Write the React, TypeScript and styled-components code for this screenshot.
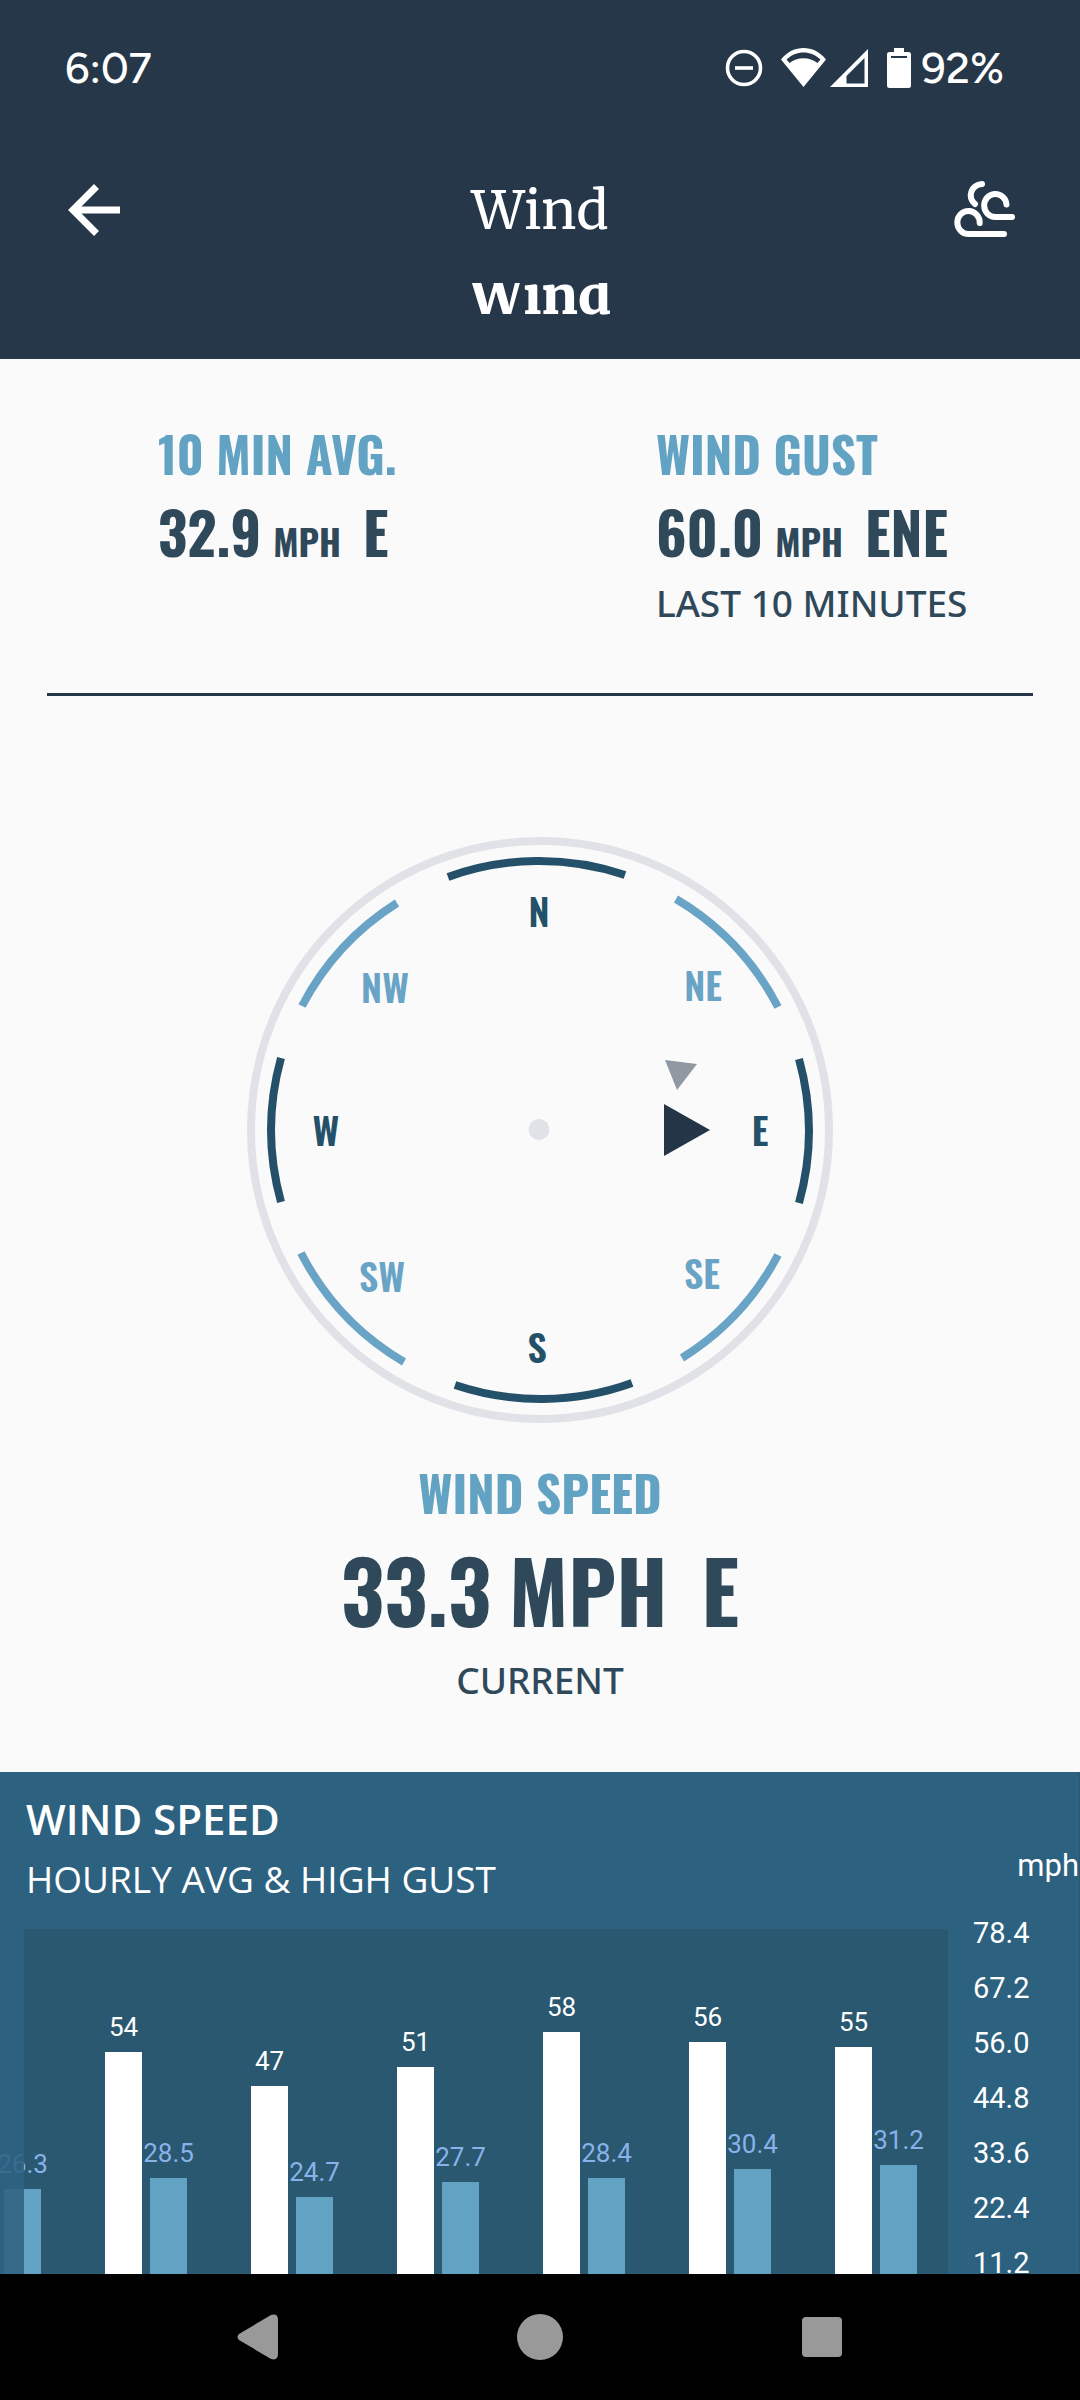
import React from "react";
import styled, { createGlobalStyle } from "styled-components";

const colors = {
  header: "#253748",
  page: "#fafafa",
  ink: "#2f495b",
  accent: "#62a3c4",
  compassDark: "#24506a",
  compassLight: "#69a4c6",
  ring: "#e1e2e7",
  panel: "#2d6180",
  plot: "#295870",
  avgLabel: "#8ab2ea",
};

const display = `"Oswald", "Roboto Condensed", "Open Sans Condensed", sans-serif`;
const body = `"Open Sans", "Noto Sans", sans-serif`;
const note = `"Noto Sans", "Open Sans", sans-serif`;
const heading = `"Merriweather", "DejaVu Serif Condensed", serif`;
const system = `"Figtree", "Lato", "Inter", sans-serif`;
const chartFont = `"Roboto", "Liberation Sans", sans-serif`;

const GlobalStyle = createGlobalStyle`
  *, *::before, *::after { box-sizing: border-box; }
  body { margin: 0; background: ${colors.page}; }
  h1, h2, p { margin: 0; font-weight: inherit; }
  button { padding: 0; border: 0; background: none; color: inherit; cursor: pointer; }
  svg { display: block; }
`;

const Screen = styled.div`
  display: flex;
  flex-direction: column;
  min-height: 100vh;
  overflow: hidden;
`;

/* Header */

const Header = styled.header`
  background: ${colors.header};
  color: #fff;
`;

const StatusBar = styled.div`
  display: flex;
  align-items: center;
  justify-content: space-between;
  height: 136px;
  padding: 0 76px 0 65px;
  font: 500 43px/56px ${system};
`;

const StatusIcons = styled.div`
  display: flex;
  align-items: center;
  gap: 18px;
`;

const BatteryStatus = styled.div`
  display: flex;
  align-items: center;
  gap: 10px;
`;

const TitleRow = styled.div`
  display: grid;
  grid-template-columns: 64px 1fr 64px;
  align-items: center;
  height: 147px;
  padding: 0 62px;
`;

const IconButton = styled.button`
  display: flex;
  align-items: center;
  justify-content: center;
  width: 64px;
  height: 64px;
`;

const Title = styled.h1`
  font: 400 53px/72px ${heading};
  text-align: center;
`;

const CollapsedTitle = styled.div`
  height: 76px;
  overflow: hidden;
  font: 900 53px/24px ${heading};
  text-align: center;
`;

/* Readings */

const Stats = styled.section`
  display: grid;
  grid-template-columns: 54% 46%;
  padding: 64px 0 66px 158px;
`;

const Stat = styled.div<{ $centered?: boolean }>`
  display: flex;
  flex-direction: column;
  align-items: ${(p) => (p.$centered ? "center" : "flex-start")};
  gap: ${(p) => (p.$centered ? 18 : 12)}px;
  white-space: nowrap;
`;

const StatTitle = styled.h2`
  color: ${colors.accent};
  font: 700 49px/60px ${display};
`;

const StatValue = styled.p<{ $large?: boolean }>`
  display: flex;
  align-items: baseline;
  gap: ${(p) => (p.$large ? 18 : 12)}px;
  height: ${(p) => (p.$large ? 98 : 72)}px;
  color: ${colors.ink};
  font: 700 ${(p) => (p.$large ? "84px/98px" : "57px/72px")} ${display};
`;

const Unit = styled.span<{ $large?: boolean }>`
  font-size: ${(p) => (p.$large ? 84 : 36)}px;
`;

const Direction = styled.span<{ $large?: boolean }>`
  margin-left: ${(p) => (p.$large ? 16 : 10)}px;
`;

const StatNote = styled.p`
  color: ${colors.ink};
  font: 500 37px/48px ${note};
`;

const Divider = styled.hr`
  height: 3px;
  margin: 0 47px;
  border: 0;
  background: ${colors.header};
`;

const Current = styled.section`
  display: flex;
  flex-direction: column;
  align-items: center;
  gap: 38px;
  padding: 140px 0 68px;
`;

const CompassLabel = styled.text`
  font: 600 38px ${display};
  text-anchor: middle;
`;

/* Chart */

const ChartPanel = styled.section`
  display: grid;
  grid-template: minmax(0, 1fr) / 1fr 132px;
  flex: 1 0 500px;
  overflow: hidden;
  background: ${colors.panel};
  color: #fff;
`;

const ChartMain = styled.div`
  display: flex;
  flex-direction: column;
  min-width: 0;
`;

const ChartHeading = styled.div`
  display: flex;
  flex-direction: column;
  gap: 8px;
  padding: 19px 0 26px 26px;
  white-space: nowrap;
`;

const ChartTitle = styled.h2`
  font: 600 42px/56px ${body};
`;

const ChartSubtitle = styled.p`
  font: 400 37px/48px ${body};
`;

const Plot = styled.div`
  position: relative;
  display: flex;
  flex: 1;
  align-items: flex-end;
  justify-content: flex-end;
  gap: 64px;
  padding-right: 31px;
  overflow: hidden;
  background: linear-gradient(to right, ${colors.panel} 24px, ${colors.plot} 24px);
`;

const PlotFade = styled.div`
  position: absolute;
  inset: 0 auto 0 0;
  width: 24px;
  background: rgba(45, 97, 128, 0.86);
`;

const Hour = styled.div`
  display: flex;
  flex: none;
  align-items: flex-end;
  gap: 8px;
`;

const BarColumn = styled.div<{ $gust?: boolean }>`
  display: flex;
  flex-direction: column;
  align-items: center;
  gap: 9px;
  width: 37px;
  color: ${(p) => (p.$gust ? "#fff" : colors.avgLabel)};
  font: 400 26px/32px ${chartFont};
`;

const Bar = styled.div<{ $gust?: boolean }>`
  width: 100%;
  background: ${(p) => (p.$gust ? "#fff" : colors.accent)};
`;

const Axis = styled.div`
  padding-top: 74px;
  border-right: 1px solid ${colors.plot};
  font-family: ${chartFont};
`;

const AxisUnit = styled.p`
  margin-bottom: 20px;
  font-size: 31px;
  line-height: 40px;
  text-align: right;
`;

const AxisTick = styled.p`
  padding-left: 25px;
  font-size: 29px;
  line-height: 55px;
`;

/* Navigation */

const NavBar = styled.nav`
  display: flex;
  flex: none;
  align-items: center;
  justify-content: center;
  gap: 218px;
  height: 126px;
  background: #000;
`;

const arcs = [
  { d: "M202 41A269 269 0 0 1 379 39", minor: false },
  { d: "M430 63A269 269 0 0 1 532 171", minor: true },
  { d: "M553 223A269 269 0 0 1 553 367", minor: false },
  { d: "M532 419A269 269 0 0 1 436 522", minor: true },
  { d: "M386 547A269 269 0 0 1 209 549", minor: false },
  { d: "M158 526A269 269 0 0 1 55 417", minor: true },
  { d: "M35 366A269 269 0 0 1 35 222", minor: false },
  { d: "M56 170A269 269 0 0 1 151 67", minor: true },
];

const points = [
  { name: "N", x: 293, y: 91 },
  { name: "NE", x: 457, y: 165, minor: true },
  { name: "E", x: 514, y: 310 },
  { name: "SE", x: 456, y: 453, minor: true },
  { name: "S", x: 291, y: 527 },
  { name: "SW", x: 136, y: 456, minor: true },
  { name: "W", x: 80, y: 310 },
  { name: "NW", x: 139, y: 167, minor: true },
];

const shade = (minor?: boolean) => (minor ? colors.compassLight : colors.compassDark);

function Compass() {
  return (
    <svg width="588" height="588" viewBox="0 0 588 588" role="img" aria-label="Wind direction">
      <circle cx="294" cy="294" r="289" fill="none" stroke={colors.ring} strokeWidth="8" />
      {arcs.map((arc) => (
        <path key={arc.d} d={arc.d} fill="none" stroke={shade(arc.minor)} strokeWidth="8" />
      ))}
      {points.map((p) => (
        <CompassLabel key={p.name} x={p.x} y={p.y} fill={shade(p.minor)}>
          {p.name}
        </CompassLabel>
      ))}
      <circle cx="293" cy="293.500" r="10.500" fill={colors.ring} />
      <path d="M419 224L451 228L431 254Z" fill="#9099a1" />
      <path d="M418 268V320L464 294Z" fill="#253548" />
    </svg>
  );
}

const hours: { avg: number; gust?: number }[] = [
  { avg: 26.3 },
  { gust: 54, avg: 28.5 },
  { gust: 47, avg: 24.7 },
  { gust: 51, avg: 27.7 },
  { gust: 58, avg: 28.4 },
  { gust: 56, avg: 30.4 },
  { gust: 55, avg: 31.2 },
];

const ticks = ["78.4", "67.2", "56.0", "44.8", "33.6", "22.4", "11.2"];

/* The lowest 9 mph of the scale lie below the visible part of the plot. */
const barHeight = (mph: number) => Math.round(mph * 4.95 - 45);

function SpeedBar({ value, gust }: { value: number; gust?: boolean }) {
  return (
    <BarColumn $gust={gust}>
      <span>{value}</span>
      <Bar $gust={gust} style={{ height: barHeight(value) }} />
    </BarColumn>
  );
}

export default function App() {
  return (
    <Screen>
      <GlobalStyle />
      <Header>
        <StatusBar>
          <span>6:07</span>
          <StatusIcons>
            <svg width="38" height="38" viewBox="0 0 38 38" fill="none" stroke="#fff" strokeWidth="3.600">
              <circle cx="19" cy="19" r="16.500" />
              <path d="M10 19H28" />
            </svg>
            <svg width="88" height="40" viewBox="0 0 88 40" fill="#fff">
              <path
                fillRule="evenodd"
                d="M22.500 39L0 11.500C12-3.800 33-3.800 45 11.500L22.500 39ZM5.500 11.500L8.500 15C16 8.500 29 8.500 36.500 15L39.500 11.500C30 2 15 2 5.500 11.500Z"
              />
              <path fillRule="evenodd" d="M87 1V39H49L87 1ZM83.500 10L65.500 28V35.500H83.500V10Z" />
            </svg>
            <BatteryStatus>
              <svg width="24" height="40" viewBox="0 0 24 40" fill="#fff">
                <path fillRule="evenodd" d="M7 0H17V4H21.500Q24 4 24 6.500V37.500Q24 40 21.500 40H2.500Q0 40 0 37.500V6.500Q0 4 2.500 4H7ZM4 8V10H20V8Z" />
              </svg>
              <span>92%</span>
            </BatteryStatus>
          </StatusIcons>
        </StatusBar>
        <TitleRow>
          <IconButton type="button" aria-label="Back">
            <svg width="52" height="52" viewBox="0 0 52 52" fill="none" stroke="#fff" strokeWidth="7">
              <path d="M28.500 2.500L5 26L28.500 49.500M5 26H52" />
            </svg>
          </IconButton>
          <Title>Wind</Title>
          <IconButton type="button" aria-label="Wind details">
            <svg
              width="64"
              height="60"
              viewBox="0 0 64 60"
              fill="none"
              stroke="#fff"
              strokeWidth="6"
              strokeLinecap="round"
            >
              <path d="M50 54H14.500A11.200 11.500 0 1 1 25.700 43" />
              <path d="M58 37H41.500A11.200 11.500 0 1 1 52.500 24.500" />
              <path d="M28 4C17 5 13 17 21 24" />
            </svg>
          </IconButton>
        </TitleRow>
        <CollapsedTitle>Wind</CollapsedTitle>
      </Header>

      <main>
        <Stats>
          <Stat>
            <StatTitle>10 MIN AVG.</StatTitle>
            <StatValue>
              <span>32.9</span>
              <Unit>MPH</Unit>
              <Direction>E</Direction>
            </StatValue>
          </Stat>
          <Stat>
            <StatTitle>WIND GUST</StatTitle>
            <StatValue>
              <span>60.0</span>
              <Unit>MPH</Unit>
              <Direction>ENE</Direction>
            </StatValue>
            <StatNote>LAST 10 MINUTES</StatNote>
          </Stat>
        </Stats>
        <Divider />
        <Current>
          <Compass />
          <Stat $centered>
            <StatTitle>WIND SPEED</StatTitle>
            <StatValue $large>
              <span>33.3</span>
              <Unit $large>MPH</Unit>
              <Direction $large>E</Direction>
            </StatValue>
            <StatNote>CURRENT</StatNote>
          </Stat>
        </Current>
      </main>

      <ChartPanel>
        <ChartMain>
          <ChartHeading>
            <ChartTitle>WIND SPEED</ChartTitle>
            <ChartSubtitle>HOURLY AVG &amp; HIGH GUST</ChartSubtitle>
          </ChartHeading>
          <Plot>
            {hours.map((hour) => (
              <Hour key={hour.avg}>
                {hour.gust !== undefined && <SpeedBar gust value={hour.gust} />}
                <SpeedBar value={hour.avg} />
              </Hour>
            ))}
            <PlotFade />
          </Plot>
        </ChartMain>
        <Axis>
          <AxisUnit>mph</AxisUnit>
          {ticks.map((tick) => (
            <AxisTick key={tick}>{tick}</AxisTick>
          ))}
        </Axis>
      </ChartPanel>

      <NavBar>
        <IconButton type="button" aria-label="Back">
          <svg width="42" height="46" viewBox="0 0 42 46" fill="#999">
            <path d="M2 20L34 1Q41-1 41 6V40Q41 47 34 45L2 26Q-1 23 2 20Z" />
          </svg>
        </IconButton>
        <IconButton type="button" aria-label="Home">
          <svg width="46" height="46" viewBox="0 0 46 46" fill="#999">
            <circle cx="23" cy="23" r="23" />
          </svg>
        </IconButton>
        <IconButton type="button" aria-label="Overview">
          <svg width="40" height="40" viewBox="0 0 40 40" fill="#999">
            <rect width="40" height="40" rx="4" />
          </svg>
        </IconButton>
      </NavBar>
    </Screen>
  );
}
